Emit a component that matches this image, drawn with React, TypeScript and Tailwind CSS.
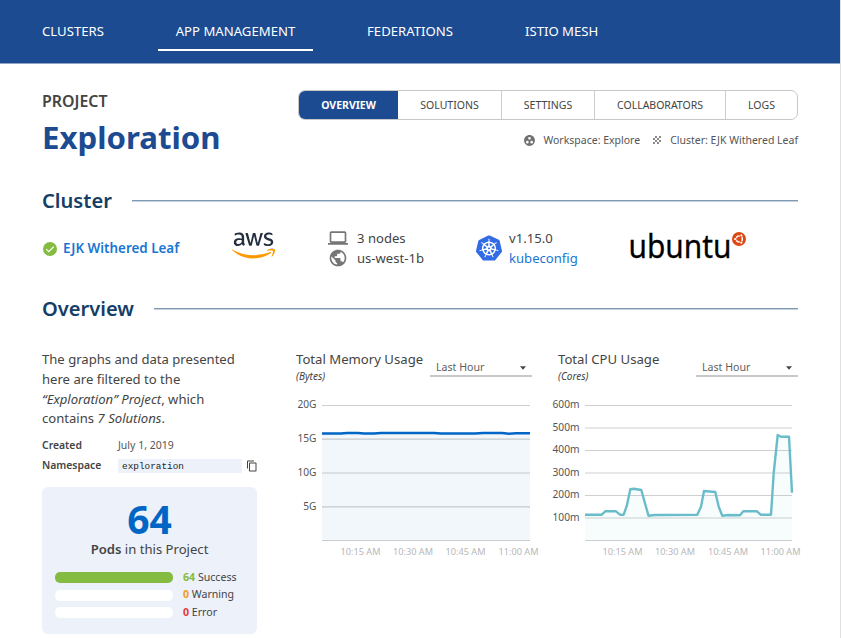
import React from "react";
import { MdPublic, MdGroupWork, MdGrain, MdContentCopy, MdLaptop } from "react-icons/md";
import { FaAws } from "react-icons/fa";
import { SiKubernetes } from "react-icons/si";

function SectionTitle({ children }: { children: React.ReactNode }) {
  return (
    <div className="flex h-7 items-center gap-5">
      <h2 className="text-[20.1px] leading-7 font-semibold text-[#153e66]">{children}</h2>
      <div className="h-[2px] flex-1 border-t border-[#7f9bb3] bg-[#c5d2de]" />
    </div>
  );
}

function UbuntuMark() {
  return (
    <svg className="mt-[4px] size-[14px]" viewBox="0 0 14 14">
      <circle cx="7" cy="7" r="7" fill="#dd4814" />
      <circle cx="7.3" cy="7" r="3.1" fill="none" stroke="white" strokeWidth="1.4" />
      {[60, 180, 300].map((angle) => (
        <g key={angle} transform={`rotate(${angle} 7.3 7)`}>
          <circle cx="11.3" cy="7" r="1.6" fill="#dd4814" />
          <circle cx="11.5" cy="7" r="1.1" fill="white" />
        </g>
      ))}
    </svg>
  );
}

type ChartProps = {
  title: string;
  unit: string;
  ticks: { label: string; y: number }[];
  plotX: number;
  plotEnd: number;
  line: string;
  color: string;
  fill: string;
  lead: string;
  labelX: number[];
};

const times = ["10:15 AM", "10:30 AM", "10:45 AM", "11:00 AM"];

function Chart({ title, unit, ticks, plotX, plotEnd, line, color, fill, lead, labelX }: ChartProps) {
  return (
    <section className={lead}>
      <div className="flex h-[46px] justify-between">
        <div className="whitespace-nowrap">
          <h3 className="text-[13.15px] leading-5">{title}</h3>
          <p className="text-[10px] leading-[14px] italic">{unit}</p>
        </div>
        <div className="mt-[7px] flex h-[21px] w-[102px] items-center justify-between border-b-2 border-[#c8c8c8] pr-[6px] pl-[6px]">
          <span className="pt-[2px] text-[10.6px] leading-4 text-[#606060]">Last Hour</span>
          <svg className="mt-[5px] h-1 w-[6px]" viewBox="0 0 7 4">
            <path d="M0 0h7L3.5 4z" fill="#444" />
          </svg>
        </div>
      </div>
      <svg className="block h-[170px] w-[240px] overflow-visible" viewBox="0 0 240 170">
        {ticks.map((t) => (
          <g key={t.y}>
            <path d={`M${plotX} ${t.y}H${plotEnd}`} stroke="#cfcfcf" strokeWidth="1.2" />
            {t.label && (
              <text x={plotX - 5.5} y={t.y + 2.8} textAnchor="end" fontSize="10.2" fill="#555">
                {t.label}
              </text>
            )}
          </g>
        ))}
        <path d={`M${line}V145.5H${plotX}Z`} fill={fill} fillOpacity="0.05" />
        <path d={`M${line}`} fill="none" stroke={color} strokeWidth="2.4" strokeLinejoin="round" />
        {times.map((t, i) => (
          <text key={t} x={labelX[i]} y="160" textAnchor="middle" fontSize="9.2" fill="#b8b8b8">
            {t}
          </text>
        ))}
      </svg>
    </section>
  );
}

const pods = [
  { n: 64, name: "Success", bar: "bg-[#84bb41]", text: "text-[#84bb41]" },
  { n: 0, name: "Warning", bar: "bg-white", text: "text-[#f5981d]" },
  { n: 0, name: "Error", bar: "bg-white", text: "text-[#e53935]" },
];

export default function App() {
  return (
    <div className="h-[638px] w-[841px] overflow-hidden border-r border-[#e0e0e0] bg-white font-['Noto_Sans',sans-serif] text-[#444]">
      <nav className="flex h-[64px] border-b border-[#8ea5c8] bg-[#1c4b91] pl-[42px] text-[13.15px] leading-5 text-white">
        <a className="mt-[21px] w-[116px]">CLUSTERS</a>
        <a className="mt-[21px] h-[30px] w-[155px] border-b-2 border-white text-center">APP MANAGEMENT</a>
        <a className="mt-[21px] ml-[54px] w-[158px]">FEDERATIONS</a>
        <a className="mt-[21px]">ISTIO MESH</a>
      </nav>

      <main className="pr-[42px] pl-[42px]">
        <header className="flex h-[123px] justify-between pt-[26px]">
          <div>
            <p className="mt-[1px] h-[20px] text-[15.9px] leading-5 font-semibold">PROJECT</p>
            <h1 className="pt-px text-[31.2px] leading-[50px] font-bold text-[#1c4b91]">Exploration</h1>
          </div>
          <div className="w-[500px]">
            <div className="flex h-[30px] overflow-hidden rounded-[7px] border border-[#c8c8c8] text-center text-[10.5px] leading-[28px]">
              <b className="w-[99px] bg-[#1c4b91] text-white">OVERVIEW</b>
              <span className="w-[104px] border-r border-[#ccc]">SOLUTIONS</span>
              <span className="w-[93px] border-r border-[#ccc]">SETTINGS</span>
              <span className="w-[131px] border-r border-[#ccc]">COLLABORATORS</span>
              <span className="flex-1">LOGS</span>
            </div>
            <div className="mt-[11px] flex h-5 items-center justify-end text-[10.5px] whitespace-nowrap text-[#555]">
              <MdGroupWork className="mr-[7px] mb-[2px] size-[13px] text-[#707070]" />
              <span>Workspace: Explore</span>
              <MdGrain className="mr-[7px] mb-[2px] ml-[11px] size-3 text-[#707070]" />
              <span>Cluster: EJK Withered Leaf</span>
            </div>
          </div>
        </header>

        <SectionTitle>Cluster</SectionTitle>
        <div className="flex h-[80px] pt-[13px] text-[13.1px] leading-5">
          <div className="mt-[10px] flex h-5 w-[190px] items-center gap-[6px] pl-[1px] text-[13.4px] font-semibold text-[#1976d2]">
            <svg className="mt-[1px] size-[14px]" viewBox="0 0 14 14">
              <circle cx="7" cy="7" r="7" fill="#84bb41" />
              <path d="M3.3 7.2 5.8 9.7 10.8 4.6" fill="none" stroke="white" strokeWidth="1.2" />
            </svg>
            <span className="whitespace-nowrap">EJK Withered Leaf</span>
          </div>
          <div className="h-[35px] w-[96px]">
            <svg className="absolute size-0">
              <linearGradient id="smile" x2="0" y2="1">
                <stop offset="0.63" stopColor="#232f3e" />
                <stop offset="0.63" stopColor="#ff9900" />
              </linearGradient>
            </svg>
            <FaAws className="h-[35px] w-[43px]" fill="url(#smile)" />
          </div>
          <div className="grid h-10 w-[148px] grid-cols-[29px_1fr] items-center">
            <MdLaptop className="size-5 text-[#757575]" />
            <span>3 nodes</span>
            <MdPublic className="size-5 text-[#757575]" />
            <span>us-west-1b</span>
          </div>
          <div className="flex h-10 w-[154px] items-center gap-[7px]">
            <SiKubernetes className="size-[26px] text-[#326ce5]" />
            <div>
              <p>v1.15.0</p>
              <p className="text-[#1976d2]">kubeconfig</p>
            </div>
          </div>
          <div className="flex">
            <svg className="h-9 w-[102px] overflow-visible" viewBox="0 0 102 36">
              <text
                x="-1.5"
                y="30"
                fontSize="32.5"
                fill="#000"
                stroke="#000"
                strokeWidth="0.3"
                textLength="103"
                lengthAdjust="spacingAndGlyphs"
              >
                ubuntu
              </text>
            </svg>
            <UbuntuMark />
          </div>
        </div>

        <SectionTitle>Overview</SectionTitle>
        <div className="flex pt-[26px]">
          <aside className="w-[254px]">
            <p className="pt-[1px] text-[13.1px] leading-[19.8px] whitespace-nowrap">
              The graphs and data presented
              <br />
              here are filtered to the
              <br />
              <i>“Exploration” Project</i>, which
              <br />
              contains <i>7 Solutions</i>.
            </p>
            <dl className="mt-[6px] grid w-[215px] grid-cols-[76px_124px_1fr] text-[10.5px] leading-5">
              <dt className="text-[10.4px] font-semibold">Created</dt>
              <dd className="col-span-2 text-[#555]">July 1, 2019</dd>
              <dt className="text-[10.4px] font-semibold">Namespace</dt>
              <dd className="mt-[4px] h-[14px] bg-[#ecf1fa] pl-[4px] font-['Liberation_Mono',monospace] text-[9.4px] leading-[15px] text-[#222]">
                exploration
              </dd>
              <dd className="pt-[5px] pl-1">
                <MdContentCopy className="size-[12px]" />
              </dd>
            </dl>
            <div className="mt-[12px] h-[147px] w-[215px] rounded-[6px] bg-[#ecf1fa] px-[13px] text-center">
              <p className="h-[52px] pt-[12px] text-[39px] leading-[40px] font-bold text-[#0066c5]">64</p>
              <p className="text-[13.1px] leading-5">
                <b className="font-semibold">Pods</b> in this Project
              </p>
              <ul className="mt-[10px] text-left">
                {pods.map((p) => (
                  <li key={p.name} className="flex h-[17.5px] items-center">
                    <span className={`mr-[10px] h-[11px] w-[118px] rounded-[5px] ${p.bar}`} />
                    <span className="text-[10.6px] whitespace-nowrap">
                      <b className={p.text}>{p.n}</b> {p.name}
                    </span>
                  </li>
                ))}
              </ul>
            </div>
          </aside>
          <Chart
            title="Total Memory Usage"
            unit="(Bytes)"
            lead="w-[236px]"
            plotX={26}
            plotEnd={234}
            color="#0066c5"
            fill="#0066c5"
            line="26 38.5H45L51 38H62L68 38.5H78L85 38H138L145 38.5H179L187 38H206L213 38.7L220 38.3H234"
            labelX={[64.5, 117, 169.5, 222.5]}
            ticks={[
              { label: "20G", y: 10.5 },
              { label: "15G", y: 44.1 },
              { label: "10G", y: 78 },
              { label: "5G", y: 111.8 },
              { label: "", y: 145.5 },
            ]}
          />
          <Chart
            title="Total CPU Usage"
            unit="(Cores)"
            lead="ml-[26px] w-[240px]"
            plotX={27}
            plotEnd={234}
            color="#69bdca"
            fill="#69bdca"
            line="27 119.7H43.7L47.3 116.3H58L62 119.7H65.7L69 110L72.3 94.3L75.7 93.7L83.3 95L87 108.3L90.5 120.7L97 120L139.3 119.7L143 111.7L146 96L157.3 97L160.7 111.7L164.3 120.7L170 120L182 120.3L185.3 116.3H199L202.7 119.7H213L215.7 78L219.7 40L223 41.7H231L234 97.7"
            labelX={[64.5, 117, 170, 222.5]}
            ticks={[
              { label: "600m", y: 10.5 },
              { label: "500m", y: 33 },
              { label: "400m", y: 55.5 },
              { label: "300m", y: 78 },
              { label: "200m", y: 100.5 },
              { label: "100m", y: 123 },
              { label: "", y: 145.5 },
            ]}
          />
        </div>
      </main>
    </div>
  );
}
